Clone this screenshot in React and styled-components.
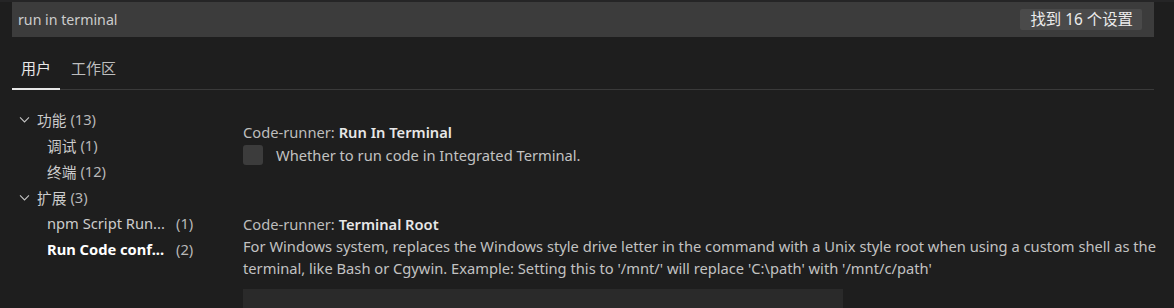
import styled, { createGlobalStyle } from 'styled-components';

const GlobalStyle = createGlobalStyle`
  html, body {
    margin: 0;
    background: #1e1e1e;
  }
  body {
    font-family: "Noto Sans", "Noto Sans CJK SC", sans-serif;
    color: #cccccc;
    overflow: hidden;
  }
`;

const Page = styled.div`
  width: 1174px;
  height: 308px;
  overflow: hidden;
  padding-top: 2px;
  box-sizing: border-box;
  background: linear-gradient(#252526 0 2px, #1e1e1e 2px);
`;

const SearchBar = styled.div`
  margin: 0 20px 0 12px;
  height: 35px;
  background: #3c3c3c;
  display: flex;
  align-items: center;
  justify-content: space-between;
  padding: 0 12px 0 6px;
`;

const SearchText = styled.span`
  font-size: 14.2px;
  color: #cccccc;
`;

const CountBadge = styled.span`
  background: #4a4a4a;
  color: #ececec;
  font-size: 15.4px;
  height: 21px;
  line-height: 21px;
  padding: 0 9px 0 10px;
  border-radius: 2px;
`;

const TabBar = styled.div`
  margin: 0 20px 0 12px;
  height: 52px;
  display: flex;
  align-items: flex-end;
  border-bottom: 1px solid #3a3a3a;
`;

const Tab = styled.div`
  font-size: 15px;
  padding: 0 9px 9px;
  height: 34px;
  box-sizing: border-box;
  display: flex;
  align-items: center;
  color: ${p => (p.active ? '#e7e7e7' : '#bdbdbd')};
  border-bottom: 2px solid ${p => (p.active ? '#e7e7e7' : 'transparent')};
  margin-bottom: -1px;
  margin-right: 2px;
`;

const Body = styled.div`
  display: flex;
  padding: 16px 0 0 12px;
`;

const Tree = styled.div`
  width: 231px;
  flex-shrink: 0;
`;

const TreeRow = styled.div`
  height: 26px;
  display: flex;
  align-items: center;
  padding-left: ${p => (p.child ? 35 : 6)}px;
  font-size: 14.7px;
  color: ${p => (p.bold ? '#ffffff' : '#cccccc')};
  font-weight: ${p => (p.bold ? 700 : 400)};
  white-space: nowrap;
`;

const Chevron = styled.svg`
  width: 13px;
  height: 13px;
  margin-right: 6px;
`;

const TreeLabel = styled.span`
  width: ${p => (p.fixed ? '125px' : 'auto')};
  margin-right: 4px;
`;

const TreeCount = styled.span`
  font-weight: 400;
  color: #b8b8b8;
`;

const Settings = styled.div`
  flex: 1;
  padding-right: 8px;
`;

const Setting = styled.div`
  padding-top: ${p => p.top}px;
`;

const Title = styled.div`
  font-size: 14.7px;
  line-height: 22px;
  color: #bdbdbd;
  b {
    color: #e7e7e7;
    font-weight: 600;
  }
`;

const CheckRow = styled.div`
  display: flex;
  align-items: center;
  gap: 13px;
  height: 24px;
`;

const Checkbox = styled.div`
  width: 20px;
  height: 20px;
  background: #3c3c3c;
  border-radius: 3px;
`;

const Desc = styled.div`
  font-size: 14.7px;
  line-height: 22px;
  color: #c2c2c2;
`;

const TextInput = styled.div`
  width: 600px;
  height: 26px;
  margin-top: 10px;
  background: #2a2a2a;
`;

const ChevronIcon = () => (
  <Chevron viewBox="0 0 16 16">
    <path d="M2.5 5.5 L8 11 L13.5 5.5" fill="none" stroke="#c5c5c5" strokeWidth="1.3" />
  </Chevron>
);

export default function App() {
  return (
    <Page>
      <GlobalStyle />
      <SearchBar>
        <SearchText>run in terminal</SearchText>
        <CountBadge>找到 16 个设置</CountBadge>
      </SearchBar>
      <TabBar>
        <Tab active>用户</Tab>
        <Tab>工作区</Tab>
      </TabBar>
      <Body>
        <Tree>
          <TreeRow><ChevronIcon /><TreeLabel>功能</TreeLabel><TreeCount>(13)</TreeCount></TreeRow>
          <TreeRow child><TreeLabel>调试</TreeLabel><TreeCount>(1)</TreeCount></TreeRow>
          <TreeRow child><TreeLabel>终端</TreeLabel><TreeCount>(12)</TreeCount></TreeRow>
          <TreeRow><ChevronIcon /><TreeLabel>扩展</TreeLabel><TreeCount>(3)</TreeCount></TreeRow>
          <TreeRow child><TreeLabel fixed>npm Script Run...</TreeLabel><TreeCount>(1)</TreeCount></TreeRow>
          <TreeRow child bold><TreeLabel fixed>Run Code conf...</TreeLabel><TreeCount>(2)</TreeCount></TreeRow>
        </Tree>
        <Settings>
          <Setting top={15}>
            <Title>Code-runner: <b>Run In Terminal</b></Title>
            <CheckRow>
              <Checkbox />
              <Desc>Whether to run code in Integrated Terminal.</Desc>
            </CheckRow>
          </Setting>
          <Setting top={46}>
            <Title>Code-runner: <b>Terminal Root</b></Title>
            <Desc>
              For Windows system, replaces the Windows style drive letter in the command with a Unix style root when using a custom shell as the terminal, like Bash or Cgywin. Example: Setting this to '/mnt/' will replace 'C:\path' with '/mnt/c/path'
            </Desc>
            <TextInput />
          </Setting>
        </Settings>
      </Body>
    </Page>
  );
}
